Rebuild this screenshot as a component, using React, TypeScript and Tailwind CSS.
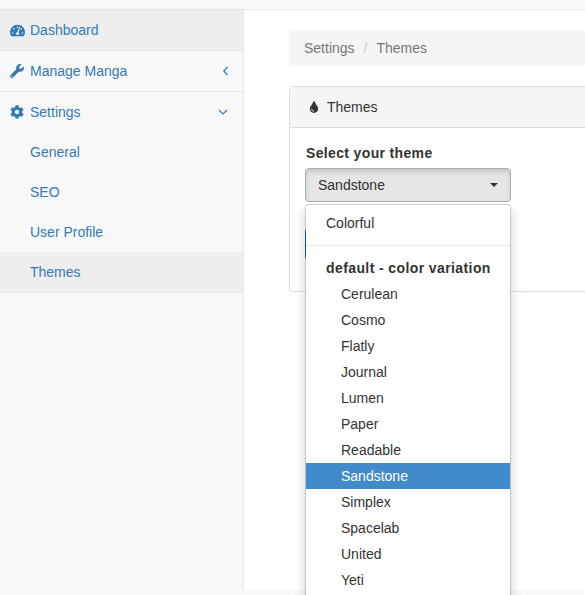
import React from "react";
import { FaTachometerAlt, FaWrench, FaCog, FaTint } from "react-icons/fa";

const subs = ["General", "SEO", "User Profile", "Themes"];
const themes = ["Cerulean", "Cosmo", "Flatly", "Journal", "Lumen", "Paper", "Readable", "Sandstone", "Simplex", "Spacelab", "United", "Yeti"];

function ChevronLeft() {
  return (
    <svg width="5" height="10" viewBox="0 0 5 10" fill="none" stroke="currentColor" strokeWidth="1.2">
      <path d="M4.5 1 L0.8 5 L4.5 9" />
    </svg>
  );
}

function ChevronDown() {
  return (
    <svg width="10" height="6" viewBox="0 0 10 6" fill="none" stroke="currentColor" strokeWidth="1.2">
      <path d="M1 1 L5 5 L9 1" />
    </svg>
  );
}

function MainRow({ icon, label, active, right }: { icon: React.ReactNode; label: string; active?: boolean; right?: React.ReactNode }) {
  return (
    <div className={`flex h-[41px] items-center border-b border-[#e7e7e7] pl-[10px] pr-[15px] text-[#337ab7] ${active ? "bg-[#eeeeee]" : ""}`}>
      <span className="flex w-[20px] shrink-0 items-center">{icon}</span>
      <span className="flex-1">{label}</span>
      {right}
    </div>
  );
}

export default function App() {
  return (
    <div className="relative h-[595px] w-[585px] overflow-hidden bg-[#f8f8f8] font-['Liberation_Sans',Arial,sans-serif] text-[14px] text-[#333333]">
      <div className="h-[10px] border-b border-[#e7e7e7] bg-[#f8f8f8]" />
      <div className="flex h-[580px]">
        <aside className="w-[244px] shrink-0 border-r border-[#e7e7e7] bg-[#f8f8f8]">
          <MainRow active icon={<FaTachometerAlt size={15} />} label="Dashboard" />
          <MainRow icon={<FaWrench size={14} />} label="Manage Manga" right={<ChevronLeft />} />
          <div className="flex h-[40px] items-center pl-[10px] pr-[15px] text-[#337ab7]">
            <span className="flex w-[20px] shrink-0 items-center"><FaCog size={14} /></span>
            <span className="flex-1">Settings</span>
            <ChevronDown />
          </div>
          {subs.map((s) => (
            <div key={s} className={`flex items-center pl-[30px] text-[#337ab7] ${s === "Themes" ? "h-[41px] border-b border-[#e7e7e7] bg-[#eeeeee]" : "h-[40px]"}`}>
              {s}
            </div>
          ))}
        </aside>
        <main className="w-[400px] shrink-0 bg-white pl-[45px] pt-[20px]">
          <div className="flex h-[36px] w-[400px] items-center rounded-l-[4px] bg-[#f5f5f5] pl-[15px] text-[#777777]">
            <span>Settings</span>
            <span className="px-[9px] text-[#cccccc]">/</span>
            <span>Themes</span>
          </div>
          <section className="mt-[20px] h-[206px] w-[400px] rounded-l-[4px] border border-r-0 border-[#dddddd] bg-white">
            <div className="flex h-[41px] items-center border-b border-[#dddddd] bg-[#f5f5f5] pl-[18px]">
              <FaTint size={12} className="mr-[7px]" />
              <span>Themes</span>
            </div>
            <div className="pl-[15px] pt-[15px]">
              <div className="mb-[5px] pl-px text-[14px] font-bold leading-[20px] tracking-[0.35px]">Select your theme</div>
              <div className="flex h-[34px] w-[206px] items-center rounded-[4px] border border-[#adadad] bg-[#e6e6e6] pl-[12px] pr-[12px] shadow-[inset_0_3px_5px_rgba(0,0,0,0.125)]">
                <span className="flex-1">Sandstone</span>
                <span className="h-0 w-0 border-x-4 border-t-4 border-x-transparent border-t-[#333333]" />
              </div>
              <div className="mt-[26px] h-[32px] w-[60px] rounded-[4px] bg-[#2e6da4]" />
            </div>
          </section>
        </main>
      </div>
      <div className="absolute left-[305px] top-[204px] h-[420px] w-[206px] rounded-[4px] border border-[rgba(0,0,0,0.15)] bg-white bg-clip-padding py-[5px] shadow-[0_6px_12px_rgba(0,0,0,0.175)]">
        <div className="flex h-[26px] items-center pl-[20px]">Colorful</div>
        <div className="my-[9px] h-px bg-[#e5e5e5]" />
        <div className="flex h-[26px] items-center pl-[20px] font-bold tracking-[0.4px]">default - color variation</div>
        {themes.map((t) => (
          <div key={t} className={`flex h-[26px] items-center pl-[35px] ${t === "Sandstone" ? "bg-[#428bca] text-white" : ""}`}>
            {t}
          </div>
        ))}
      </div>
    </div>
  );
}
